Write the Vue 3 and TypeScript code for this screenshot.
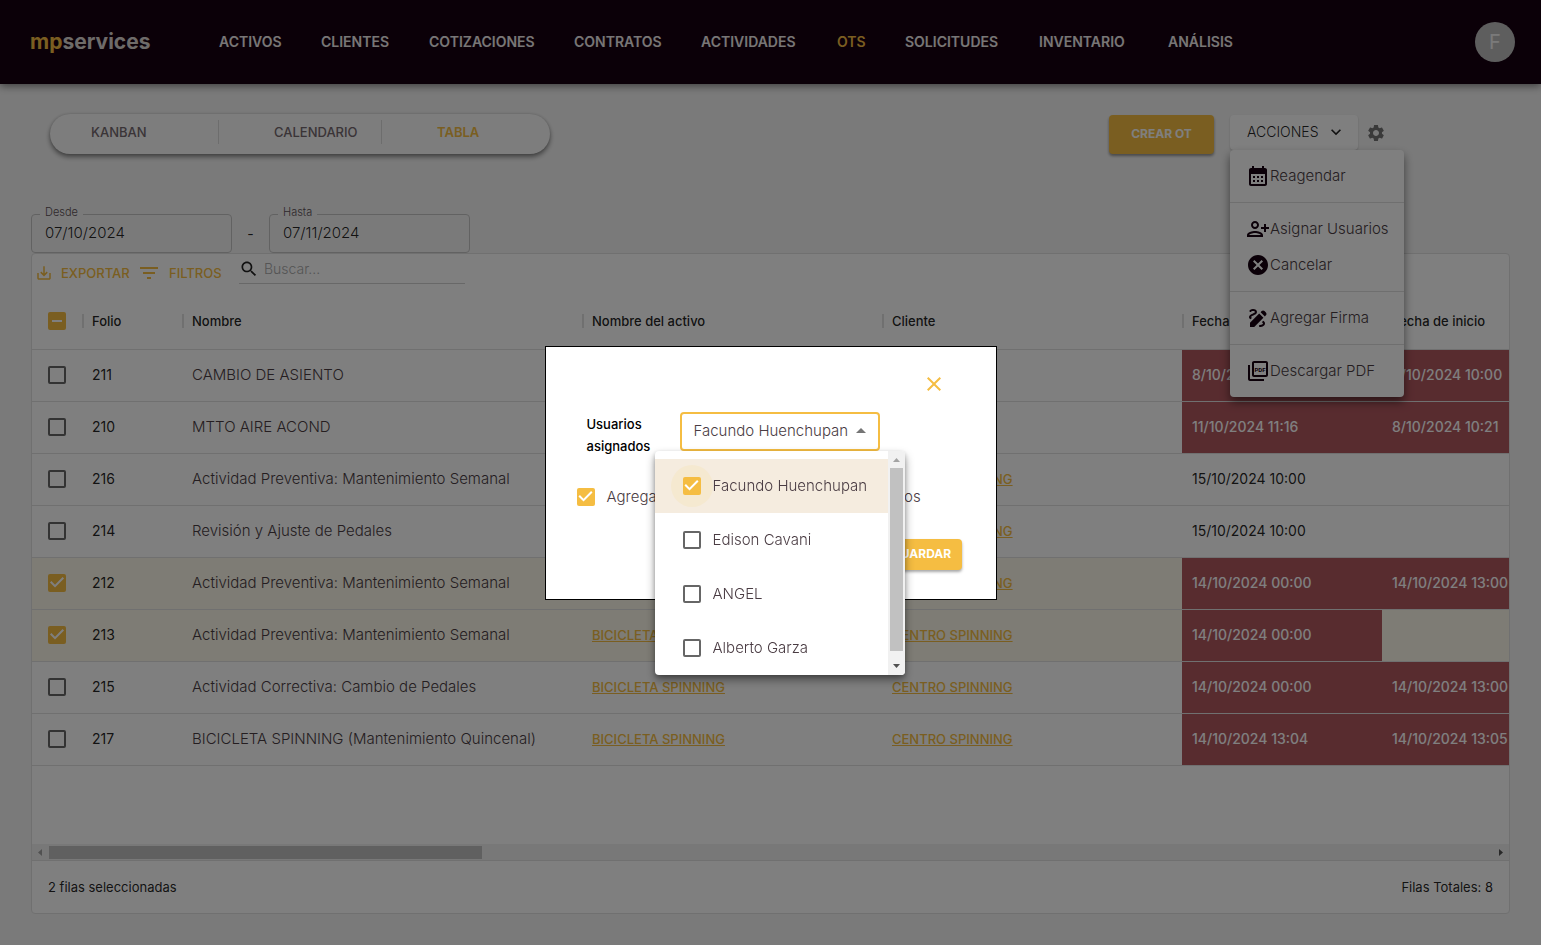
<script setup lang="ts">
import { ref } from 'vue'

interface Row {
  folio: string
  nombre: string
  activo: string
  cliente: string
  fecha: string
  inicio: string
  late: boolean
  selected: boolean
}

const nav: string[] = ['ACTIVOS', 'CLIENTES', 'COTIZACIONES', 'CONTRATOS', 'ACTIVIDADES', 'OTS', 'SOLICITUDES', 'INVENTARIO', 'ANÁLISIS']

const bici = 'BICICLETA SPINNING'
const centro = 'CENTRO SPINNING'

const rows = ref<Row[]>([
  { folio: '211', nombre: 'CAMBIO DE ASIENTO', activo: '', cliente: '', fecha: '8/10/2024 10:00', inicio: '8/10/2024 10:00', late: true, selected: false },
  { folio: '210', nombre: 'MTTO AIRE ACOND', activo: '', cliente: '', fecha: '11/10/2024 11:16', inicio: '8/10/2024 10:21', late: true, selected: false },
  { folio: '216', nombre: 'Actividad Preventiva: Mantenimiento Semanal', activo: bici, cliente: centro, fecha: '15/10/2024 10:00', inicio: '', late: false, selected: false },
  { folio: '214', nombre: 'Revisión y Ajuste de Pedales', activo: bici, cliente: centro, fecha: '15/10/2024 10:00', inicio: '', late: false, selected: false },
  { folio: '212', nombre: 'Actividad Preventiva: Mantenimiento Semanal', activo: bici, cliente: centro, fecha: '14/10/2024 00:00', inicio: '14/10/2024 13:00', late: true, selected: true },
  { folio: '213', nombre: 'Actividad Preventiva: Mantenimiento Semanal', activo: bici, cliente: centro, fecha: '14/10/2024 00:00', inicio: '', late: true, selected: true },
  { folio: '215', nombre: 'Actividad Correctiva: Cambio de Pedales', activo: bici, cliente: centro, fecha: '14/10/2024 00:00', inicio: '14/10/2024 13:00', late: true, selected: false },
  { folio: '217', nombre: 'BICICLETA SPINNING (Mantenimiento Quincenal)', activo: bici, cliente: centro, fecha: '14/10/2024 13:04', inicio: '14/10/2024 13:05', late: true, selected: false },
])

const users = ref([
  { name: 'Facundo Huenchupan', checked: true },
  { name: 'Edison Cavani', checked: false },
  { name: 'ANGEL', checked: false },
  { name: 'Alberto Garza', checked: false },
])

const desde = ref('07/10/2024')
const hasta = ref('07/11/2024')
const search = ref('')
const addUsers = ref(true)
const assigned = ref('Facundo Huenchupan')
</script>

<template>
  <div class="app">
    <header class="topbar">
      <a href="#" class="logo"><span>mp</span>services</a>
      <nav class="nav">
        <a v-for="item in nav" :key="item" href="#" :class="{ active: item === 'OTS' }">{{ item }}</a>
      </nav>
      <button class="avatar" type="button">F</button>
    </header>

    <main class="content">
      <div class="actions-row">
        <div class="tabs">
          <button type="button">KANBAN</button>
          <button type="button">CALENDARIO</button>
          <button type="button" class="active">TABLA</button>
        </div>
        <div class="actions">
          <button class="create" type="button">CREAR OT</button>
          <div class="menu-anchor">
            <button class="acciones" type="button">
              ACCIONES
              <svg viewBox="0 0 24 24" width="20" height="20"><path d="M7.41 8.59 12 13.17l4.59-4.58L18 10l-6 6-6-6z" /></svg>
            </button>
            <ul class="menu">
              <li>
                <button type="button">
                  <svg viewBox="0 0 24 24" width="24" height="24"><path d="M19 4h-1V2h-2v2H8V2H6v2H5c-1.11 0-1.99.9-1.99 2L3 20c0 1.1.89 2 2 2h14c1.1 0 2-.9 2-2V6c0-1.1-.9-2-2-2zm0 16H5V10h14v10zM9 14H7v-2h2v2zm4 0h-2v-2h2v2zm4 0h-2v-2h2v2zm-8 4H7v-2h2v2zm4 0h-2v-2h2v2zm4 0h-2v-2h2v2z" /></svg>
                  Reagendar
                </button>
              </li>
              <li class="divided">
                <button type="button">
                  <svg viewBox="0 0 24 24" width="24" height="24"><path d="M13 8c0-2.21-1.79-4-4-4S5 5.79 5 8s1.79 4 4 4 4-1.79 4-4zm-2 0c0 1.1-.9 2-2 2s-2-.9-2-2 .9-2 2-2 2 .9 2 2zM1 18v2h16v-2c0-2.66-5.33-4-8-4s-8 1.34-8 4zm2 0c.2-.71 3.3-2 6-2 2.69 0 5.78 1.28 6 2H3zM20 15v-3h3v-2h-3V7h-2v3h-3v2h3v3h2z" /></svg>
                  Asignar Usuarios
                </button>
              </li>
              <li>
                <button type="button">
                  <svg viewBox="0 0 24 24" width="24" height="24"><path d="M12 2C6.47 2 2 6.47 2 12s4.47 10 10 10 10-4.47 10-10S17.53 2 12 2zm5 13.59L15.59 17 12 13.41 8.41 17 7 15.59 10.59 12 7 8.41 8.41 7 12 10.59 15.59 7 17 8.41 13.41 12 17 15.59z" /></svg>
                  Cancelar
                </button>
              </li>
              <li class="divided">
                <button type="button">
                  <svg viewBox="0 0 24 24" width="24" height="24"><path d="M18.85 10.39l1.06-1.06c.78-.78.78-2.05 0-2.83L18.5 5.09c-.78-.78-2.05-.78-2.83 0l-1.06 1.06 4.24 4.24zm-5.66-2.83L4 16.76V21h4.24l9.19-9.19-4.24-4.25zM19 17.5c0 2.19-2.54 3.5-5 3.5-.55 0-1-.45-1-1s.45-1 1-1c1.54 0 3-.73 3-1.5 0-.47-.48-.87-1.23-1.2l1.48-1.48c1.07.63 1.75 1.47 1.75 2.68zM4.58 13.35C3.61 12.79 3 12.06 3 11c0-1.8 1.89-2.63 3.56-3.36C7.59 7.18 9 6.56 9 6c0-.41-.78-1-2-1-1.26 0-1.8.61-1.83.64-.35.41-.98.46-1.4.12-.41-.34-.49-.95-.15-1.38C3.73 4.24 4.76 3 7 3s4 1.32 4 3c0 1.87-1.93 2.72-3.64 3.47C6.42 9.88 5 10.5 5 11c0 .31.43.6 1.07.86l-1.49 1.49z" /></svg>
                  Agregar Firma
                </button>
              </li>
              <li class="divided">
                <button type="button">
                  <svg viewBox="0 0 24 24" width="24" height="24"><path d="M20 2H8c-1.1 0-2 .9-2 2v12c0 1.1.9 2 2 2h12c1.1 0 2-.9 2-2V4c0-1.1-.9-2-2-2zm0 14H8V4h12v12zM4 6H2v14c0 1.1.9 2 2 2h14v-2H4V6z" /><text x="14" y="12.500" text-anchor="middle" class="pdf">PDF</text></svg>
                  Descargar PDF
                </button>
              </li>
            </ul>
          </div>
          <button class="gear" type="button" aria-label="Configuración">
            <svg viewBox="0 0 24 24" width="20" height="20"><path d="M19.14 12.94c.04-.3.06-.61.06-.94 0-.32-.02-.64-.07-.94l2.03-1.58c.18-.14.23-.41.12-.61l-1.92-3.32c-.12-.22-.37-.29-.59-.22l-2.39.96c-.5-.38-1.03-.7-1.62-.94l-.36-2.54c-.04-.24-.24-.41-.48-.41h-3.84c-.24 0-.43.17-.47.41l-.36 2.54c-.59.24-1.13.57-1.62.94l-2.39-.96c-.22-.08-.47 0-.59.22L2.74 8.87c-.12.21-.08.47.12.61l2.03 1.58c-.05.3-.09.63-.09.94s.02.64.07.94l-2.03 1.58c-.18.14-.23.41-.12.61l1.92 3.32c.12.22.37.29.59.22l2.39-.96c.5.38 1.03.7 1.62.94l.36 2.54c.05.24.24.41.48.41h3.84c.24 0 .44-.17.47-.41l.36-2.54c.59-.24 1.13-.56 1.62-.94l2.39.96c.22.08.47 0 .59-.22l1.92-3.32c.12-.22.07-.47-.12-.61l-2.01-1.58zM12 15.6c-1.98 0-3.6-1.62-3.6-3.6s1.62-3.6 3.6-3.6 3.6 1.62 3.6 3.6-1.62 3.6-3.6 3.6z" /></svg>
          </button>
        </div>
      </div>

      <div class="dates">
        <div class="field">
          <label for="desde">Desde</label>
          <input id="desde" v-model="desde" type="text" />
        </div>
        <span class="dash">-</span>
        <div class="field">
          <label for="hasta">Hasta</label>
          <input id="hasta" v-model="hasta" type="text" />
        </div>
      </div>

      <section class="grid">
        <div class="toolbar">
          <button type="button" class="export">
            <svg viewBox="0 0 24 24" width="18" height="18"><path d="M19 12v7H5v-7H3v7c0 1.1.9 2 2 2h14c1.1 0 2-.9 2-2v-7h-2zm-6 .67l2.59-2.58L17 11.5l-5 5-5-5 1.41-1.41L11 12.67V3h2z" /></svg>
            EXPORTAR
          </button>
          <button type="button" class="filters">
            <svg viewBox="0 0 24 24" width="24" height="24"><path d="M10 18h4v-2h-4v2zM3 6v2h18V6H3zm3 7h12v-2H6v2z" /></svg>
            FILTROS
          </button>
          <label class="search">
            <svg viewBox="0 0 24 24" width="20" height="20"><path d="M15.5 14h-.79l-.28-.27C15.41 12.59 16 11.11 16 9.5 16 5.91 13.09 3 9.5 3S3 5.91 3 9.5 5.91 16 9.5 16c1.61 0 3.09-.59 4.23-1.57l.27.28v.79l5 4.99L20.49 19l-4.99-5zm-6 0C7.01 14 5 11.99 5 9.5S7.01 5 9.5 5 14 7.01 14 9.5 11.99 14 9.5 14z" /></svg>
            <input v-model="search" type="text" placeholder="Buscar..." aria-label="Buscar" />
          </label>
        </div>

        <div class="table-wrap">
          <table>
            <colgroup>
              <col class="c-check" /><col class="c-folio" /><col class="c-nombre" />
              <col class="c-wide" /><col class="c-wide" /><col class="c-date" /><col class="c-date" />
            </colgroup>
            <thead>
              <tr>
                <th class="check"><input type="checkbox" class="box mixed" aria-label="Seleccionar todas las filas" /></th>
                <th>Folio</th>
                <th>Nombre</th>
                <th>Nombre del activo</th>
                <th>Cliente</th>
                <th>Fecha límite</th>
                <th>Fecha de inicio</th>
              </tr>
            </thead>
            <tbody>
              <tr v-for="row in rows" :key="row.folio" :class="{ selected: row.selected }">
                <td class="check"><input v-model="row.selected" type="checkbox" class="box" :aria-label="'Seleccionar fila ' + row.folio" /></td>
                <td>{{ row.folio }}</td>
                <td class="light">{{ row.nombre }}</td>
                <td><a v-if="row.activo" href="#">{{ row.activo }}</a></td>
                <td><a v-if="row.cliente" href="#">{{ row.cliente }}</a></td>
                <td :class="{ late: row.late }">{{ row.fecha }}</td>
                <td :class="{ late: row.late && row.inicio }">{{ row.inicio }}</td>
              </tr>
            </tbody>
          </table>
        </div>

        <div class="hscroll">
          <svg viewBox="0 0 17 17" width="17" height="17"><path d="M10 5v7L6 8.500z" fill="#a3a3a3" /></svg>
          <div class="htrack"><div class="hthumb"></div></div>
          <svg viewBox="0 0 17 17" width="17" height="17"><path d="M7 5v7l4-3.500z" fill="#505050" /></svg>
        </div>

        <footer class="grid-footer">
          <span>2 filas seleccionadas</span>
          <span>Filas Totales: 8</span>
        </footer>
      </section>
    </main>

    <div class="backdrop">
      <form class="modal" @submit.prevent>
        <button type="button" class="close" aria-label="Cerrar">
          <svg viewBox="0 0 24 24" width="24" height="24"><path d="M19 6.41 17.59 5 12 10.59 6.41 5 5 6.41 10.59 12 5 17.59 6.41 19 12 13.41 17.59 19 19 17.59 13.41 12z" /></svg>
        </button>
        <div class="assign">
          <label for="assigned">Usuarios asignados</label>
          <div class="select-wrap">
            <select id="assigned" v-model="assigned">
              <option v-for="u in users" :key="u.name">{{ u.name }}</option>
            </select>
            <svg viewBox="0 0 24 24" width="24" height="24"><path d="M7 14l5-5 5 5z" /></svg>
            <div class="popover">
              <ul>
                <li v-for="u in users" :key="u.name" :class="{ checked: u.checked }">
                  <label>
                    <span class="ripple"><input v-model="u.checked" type="checkbox" class="box" /></span>
                    {{ u.name }}
                  </label>
                </li>
              </ul>
              <div class="vscroll">
                <svg viewBox="0 0 17 17" width="17" height="17"><path d="M5 11h7L8.500 7z" fill="#a3a3a3" /></svg>
                <div class="vthumb"></div>
                <svg viewBox="0 0 17 17" width="17" height="17"><path d="M5 6h7l-3.500 4z" fill="#505050" /></svg>
              </div>
            </div>
          </div>
        </div>
        <label class="add"><input v-model="addUsers" type="checkbox" class="box" />Agregar usuarios a los activos seleccionados</label>
        <button type="submit" class="save">GUARDAR</button>
      </form>
    </div>
  </div>
</template>

<style>
body {
  margin: 0;
}
</style>

<style scoped>
* {
  box-sizing: border-box;
}

.app {
  --amber: #f5bd42;
  --ink: #170010;
  --soft: #4a3c43;
  display: flex;
  flex-direction: column;
  height: 100vh;
  overflow: hidden;
  background: #f5f5f5;
  color: rgba(0, 0, 0, 0.87);
  font-family: Inter, Roboto, sans-serif;
  font-size: 14px;
  line-height: 20px;
}

button,
input,
select {
  margin: 0;
  padding: 0;
  border: 0;
  background: none;
  color: inherit;
  font: inherit;
}

ul {
  margin: 0;
  padding: 0;
  list-style: none;
}

svg {
  flex: none;
  fill: currentColor;
}

.topbar {
  display: flex;
  align-items: center;
  flex: none;
  height: 84px;
  padding: 0 26px 0 30px;
  background: var(--ink);
  box-shadow: 0 2px 8px rgba(0, 0, 0, 0.5);
}

.logo {
  width: 189px;
  color: #ddd6d3;
  font-size: 21px;
  font-weight: 700;
  text-decoration: none;
}

.logo span {
  color: var(--amber);
}

.nav {
  display: grid;
  grid-template-columns: 102px 108px 145px 127px 136px 68px 134px 129px auto;
}

.nav a {
  color: #f0ecec;
  font-weight: 600;
  text-decoration: none;
}

.nav a.active {
  color: var(--amber);
}

.avatar {
  width: 40px;
  height: 40px;
  margin-left: auto;
  border-radius: 50%;
  background: #bdbdbd;
  color: #f5f5f5;
  font-size: 20px;
}

.content {
  display: flex;
  flex-direction: column;
  flex: 1;
  min-height: 0;
  padding: 30px 31px 31px;
}

.actions-row {
  display: flex;
  justify-content: space-between;
  align-items: flex-start;
  padding: 0 116px 0 19px;
}

.tabs {
  display: grid;
  grid-template-columns: 169px 163px 168px;
  align-items: start;
  height: 40px;
  padding-top: 6px;
  border-radius: 20px;
  background: #fafafa;
  box-shadow: 0 3px 5px rgba(0, 0, 0, 0.45), 0 0 3px rgba(0, 0, 0, 0.15);
}

.tabs button {
  height: 24px;
  padding-left: 55px;
  border-right: 1px solid #dadada;
  color: #75696f;
  font-size: 13px;
  font-weight: 500;
  text-align: left;
}

.tabs button:first-child {
  padding-left: 41px;
}

.tabs button.active {
  border-right: 0;
  color: var(--amber);
  font-weight: 600;
}

.actions {
  display: flex;
  align-items: flex-start;
  padding-top: 1px;
}

.create {
  width: 105px;
  height: 39px;
  margin-right: 16px;
  padding-bottom: 2px;
  border-radius: 4px;
  background: var(--amber);
  box-shadow: 0 2px 3px rgba(0, 0, 0, 0.4);
  color: #fff;
  font-size: 12px;
  font-weight: 700;
}

.menu-anchor {
  position: relative;
  z-index: 2;
}

.acciones {
  display: flex;
  align-items: center;
  justify-content: space-between;
  width: 128px;
  height: 35px;
  padding: 0 12px 1px 17px;
  border-radius: 4px;
  background: #fff;
  box-shadow: 0 1px 2px rgba(0, 0, 0, 0.2);
  font-weight: 300;
}

.menu {
  position: absolute;
  top: 35px;
  left: 0;
  width: 174px;
  padding: 8px 0;
  border-radius: 4px;
  background: #fff;
  box-shadow: 0 5px 10px rgba(0, 0, 0, 0.5);
}

.menu li.divided {
  margin-top: 8px;
  padding-top: 8px;
  border-top: 1px solid #dedede;
}

.menu button {
  display: flex;
  align-items: center;
  width: 100%;
  height: 36px;
  padding-left: 16px;
  color: var(--soft);
  font-size: 15px;
  font-weight: 300;
  white-space: nowrap;
}

.menu svg {
  color: var(--ink);
}

.pdf {
  font-family: Roboto, sans-serif;
  font-size: 6px;
  font-weight: 700;
}

.gear {
  width: 36px;
  height: 35px;
  color: #757575;
}

.gear svg {
  display: block;
  margin: 0 auto;
}

.dates {
  display: flex;
  align-items: center;
  margin-top: 60px;
}

.field {
  position: relative;
  width: 201px;
  height: 39px;
  border: 1px solid #c4c4c4;
  border-radius: 4px;
}

.field label {
  position: absolute;
  top: -11px;
  left: 8px;
  padding: 0 5px;
  background: #f5f5f5;
  color: #5c5056;
  font-size: 11px;
  font-weight: 300;
  line-height: 16px;
}

.field input {
  width: 100%;
  height: 100%;
  padding: 0 0 2px 13px;
  font-size: 15px;
  font-weight: 300;
}

.dash {
  width: 37px;
  text-align: center;
}

.grid {
  display: flex;
  flex-direction: column;
  flex: 1;
  min-height: 0;
  border: 1px solid #e0e0e0;
  border-radius: 4px;
  background: #fff;
  overflow: hidden;
}

.toolbar {
  display: flex;
  align-items: center;
  flex: none;
  height: 39px;
  padding-bottom: 1px;
  color: var(--amber);
}

.toolbar button {
  display: flex;
  align-items: center;
  gap: 8px;
  font-size: 13px;
  font-weight: 500;
}

.toolbar .export {
  width: 105px;
  padding-left: 3px;
}

.filters {
  width: 102px;
}

.search {
  display: flex;
  align-items: center;
  align-self: flex-start;
  gap: 5px;
  width: 226px;
  height: 30px;
  border-bottom: 1px solid #d0d0d0;
  color: #222;
}

.search input {
  flex: 1;
  min-width: 0;
  font-weight: 300;
  outline: 0;
}

.search input::placeholder {
  color: #aaa;
  opacity: 1;
}

.table-wrap {
  flex: 1;
  min-height: 0;
  overflow: hidden;
}

table {
  width: 1550px;
  border-collapse: separate;
  border-spacing: 0;
  table-layout: fixed;
}

.c-check {
  width: 50px;
}

.c-folio {
  width: 100px;
}

.c-nombre {
  width: 400px;
}

.c-wide {
  width: 300px;
}

.c-date {
  width: 200px;
}

th,
td {
  height: 52px;
  padding: 0 10px 2px;
  border-bottom: 1px solid #e0e0e0;
  text-align: left;
  white-space: nowrap;
}

th {
  height: 57px;
  padding-bottom: 0;
  background: linear-gradient(#e0e0e0, #e0e0e0) 0 50% / 2px 14px no-repeat;
  font-size: 13px;
  font-weight: 500;
}

th.check {
  padding: 0 0 0 16px;
  background: none;
}

td.check {
  padding: 0 0 2px 16px;
}

.light {
  color: var(--soft);
  font-size: 15px;
  font-weight: 300;
}

td a {
  color: var(--amber);
  font-size: 13px;
  font-weight: 500;
}

.late {
  background: #b1585f;
  color: #fff;
  font-weight: 500;
}

tr.selected td:not(.late) {
  background: #fcf9ea;
}

.box {
  display: block;
  flex: none;
  width: 18px;
  height: 18px;
  border: 2px solid #666;
  border-radius: 2px;
  appearance: none;
}

.box:checked,
.box.mixed {
  border: 0;
  background: var(--amber);
}

.box:checked::after {
  content: '';
  display: block;
  width: 18px;
  height: 18px;
  background: #fff;
  clip-path: polygon(39% 78%, 11% 50%, 19% 42%, 39% 62%, 81% 20%, 89% 28%);
}

.box.mixed::after {
  content: '';
  display: block;
  width: 18px;
  height: 18px;
  background: linear-gradient(#fff, #fff) 50% 50% / 10px 2px no-repeat;
}

.hscroll {
  display: flex;
  align-items: center;
  flex: none;
  height: 16px;
  background: #f1f1f1;
}

.htrack {
  flex: 1;
  height: 13px;
}

.hthumb {
  width: 30%;
  height: 13px;
  background: #c1c1c1;
}

.grid-footer {
  display: flex;
  align-items: center;
  justify-content: space-between;
  flex: none;
  height: 53px;
  padding: 0 16px;
  border-top: 1px solid #e0e0e0;
  font-size: 13px;
}

.backdrop {
  position: fixed;
  inset: 0;
  z-index: 10;
  display: flex;
  align-items: center;
  justify-content: center;
  background: rgba(0, 0, 0, 0.5);
}

.modal {
  display: flex;
  flex-direction: column;
  width: 452px;
  padding: 25px 34px 29px 31px;
  border: 1px solid #000;
  background: #fff;
}

.close {
  align-self: flex-end;
  height: 24px;
  margin-right: 16px;
  color: var(--amber);
}

.assign {
  display: flex;
  align-items: flex-start;
  margin-top: 16px;
  padding-left: 10px;
}

.assign > label {
  width: 93px;
  padding-top: 1px;
  color: #000;
  font-size: 13px;
  font-weight: 500;
  line-height: 22px;
}

.select-wrap {
  position: relative;
  width: 200px;
  height: 39px;
}

.select-wrap select {
  width: 100%;
  height: 100%;
  padding: 0 0 1px 12px;
  border: 2px solid var(--amber);
  border-radius: 4px;
  color: var(--soft);
  font-size: 15px;
  font-weight: 300;
  appearance: none;
}

.select-wrap > svg {
  position: absolute;
  top: 7px;
  right: 7px;
  color: #757575;
  pointer-events: none;
}

.popover {
  position: absolute;
  top: 39px;
  left: -25px;
  display: flex;
  width: 250px;
  height: 224px;
  border-radius: 4px;
  background: #fff;
  box-shadow: 0 5px 10px rgba(0, 0, 0, 0.4), 0 2px 4px rgba(0, 0, 0, 0.2);
  overflow: hidden;
}

.popover ul {
  flex: 1;
  padding-top: 8px;
}

.popover li label {
  display: flex;
  align-items: center;
  height: 54px;
  padding-left: 16px;
  color: var(--soft);
  font-size: 15px;
  font-weight: 300;
  white-space: nowrap;
}

.popover li.checked {
  background: #f5ecdf;
}

.ripple {
  padding: 12px;
  border-radius: 50%;
}

.checked .ripple {
  background: #f5e9d0;
}

.vscroll {
  display: flex;
  flex-direction: column;
  align-items: center;
  width: 17px;
  background: #f1f1f1;
}

.vthumb {
  flex: 1;
  width: 13px;
  margin-bottom: 7px;
  background: #c1c1c1;
}

.add {
  display: flex;
  align-items: center;
  gap: 12px;
  height: 20px;
  margin-top: 30px;
  color: var(--soft);
  font-size: 15px;
  font-weight: 300;
  white-space: nowrap;
}

.save {
  align-self: flex-end;
  width: 80px;
  height: 31px;
  margin-top: 32px;
  border-radius: 4px;
  background: var(--amber);
  box-shadow: 0 2px 3px rgba(0, 0, 0, 0.35);
  color: #fff;
  font-size: 12px;
  font-weight: 700;
}
</style>
